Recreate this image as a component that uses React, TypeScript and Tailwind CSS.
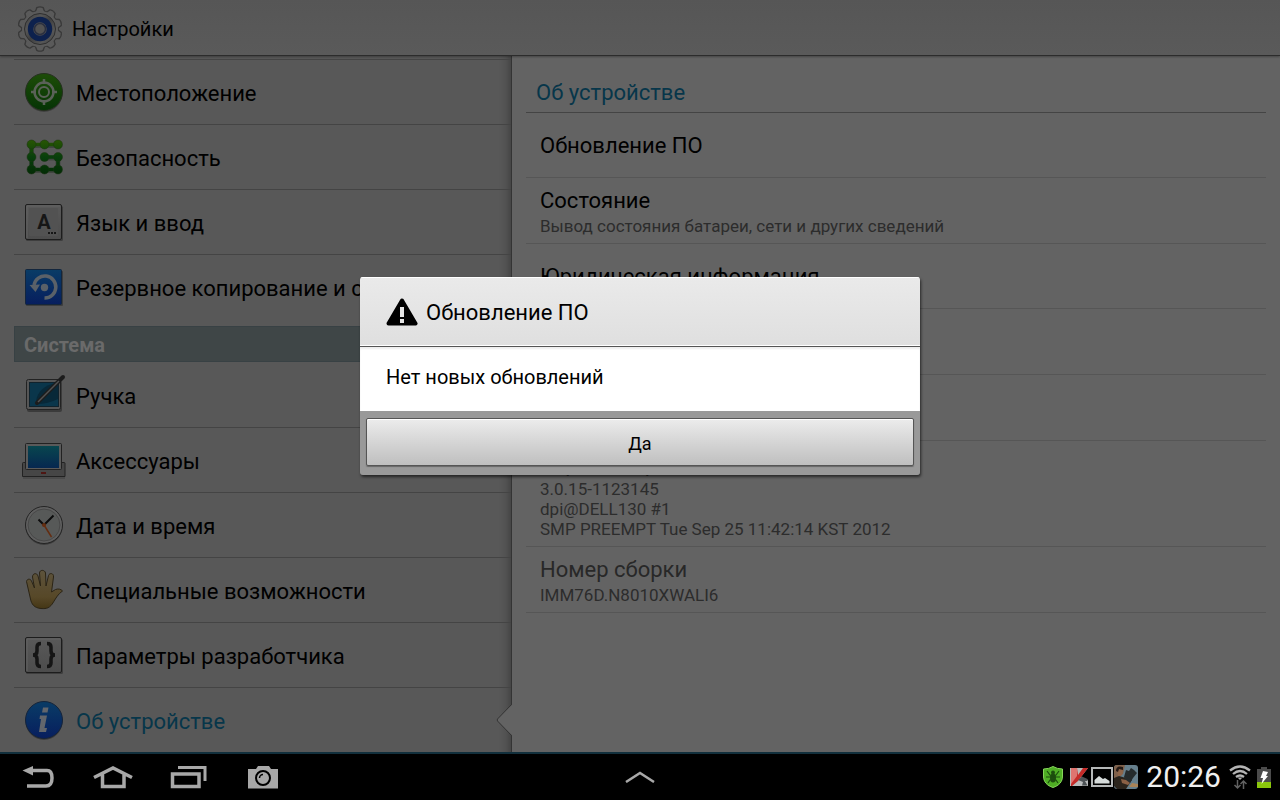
import React from 'react';

type IconProps = { children: React.ReactNode };

const Icon: React.FC<IconProps> = ({ children }) => (
  <svg viewBox="0 0 44 44" className="h-11 w-11 shrink-0" aria-hidden="true">
    {children}
  </svg>
);

const Gradients: React.FC = () => (
  <svg className="absolute h-0 w-0" aria-hidden="true">
    <defs>
      <linearGradient id="green" x1="0" y1="0" x2="0" y2="1">
        <stop offset="0" stopColor="#1d4d08" />
        <stop offset="1" stopColor="#053305" />
      </linearGradient>
      <linearGradient id="nodes" gradientUnits="userSpaceOnUse" x1="0" y1="5" x2="0" y2="39">
        <stop offset="0" stopColor="#285603" />
        <stop offset="0.5" stopColor="#083f0b" />
        <stop offset="1" stopColor="#032c05" />
      </linearGradient>
      <linearGradient id="blue" x1="0" y1="0" x2="0" y2="1">
        <stop offset="0" stopColor="#093c66" />
        <stop offset="1" stopColor="#071e5e" />
      </linearGradient>
      <linearGradient id="grey" x1="0" y1="0" x2="0" y2="1">
        <stop offset="0" stopColor="#595959" />
        <stop offset="1" stopColor="#4c4c4c" />
      </linearGradient>
      <linearGradient id="screen" x1="0" y1="0" x2="0" y2="1">
        <stop offset="0" stopColor="#08464e" />
        <stop offset="1" stopColor="#062750" />
      </linearGradient>
      <linearGradient id="skin" x1="0" y1="0" x2="0" y2="1">
        <stop offset="0" stopColor="#5d533c" />
        <stop offset="0.7" stopColor="#574828" />
        <stop offset="1" stopColor="#443615" />
      </linearGradient>
      <linearGradient id="steel" x1="0" y1="0" x2="1" y2="1">
        <stop offset="0" stopColor="#3c3c3c" />
        <stop offset="0.3" stopColor="#575757" />
        <stop offset="0.5" stopColor="#3f3f3f" />
        <stop offset="0.75" stopColor="#575757" />
        <stop offset="1" stopColor="#3c3c3c" />
      </linearGradient>
    </defs>
  </svg>
);

const teeth = [0, 36, 72, 108, 144, 180, 216, 252, 288, 324];

const GearIcon = () => (
  <svg viewBox="0 0 46 46" className="h-[46px] w-[46px]" aria-hidden="true">
    <g fill="#393939" stroke="#393939" strokeWidth="2">
      {teeth.map((angle) => (
        <path key={angle} d="M18 8L20 2Q23 0.500 26 2L28 8Z" transform={`rotate(${angle} 23 23)`} />
      ))}
    </g>
    <circle cx="23" cy="23" r="19" fill="#393939" />
    <g fill="#5a5a5a">
      {teeth.map((angle) => (
        <path key={angle} d="M18 8L20.500 2Q23 1 25.500 2L28 8Z" transform={`rotate(${angle} 23 23)`} />
      ))}
    </g>
    <circle cx="23" cy="23" r="18" fill="#5a5a5a" />
    <circle cx="23" cy="23" r="15.500" fill="url(#steel)" stroke="#2f2f2f" strokeWidth="1" />
    <circle cx="23" cy="23" r="9.500" fill="#505050" stroke="#0d214d" strokeWidth="5.500" />
    <circle cx="23" cy="23" r="5.500" fill="#525252" stroke="#2b3040" strokeWidth="1.500" />
  </svg>
);

const LocationIcon = () => (
  <Icon>
    <circle cx="22" cy="23.500" r="18.500" fill="#404040" />
    <circle cx="22" cy="22" r="18.500" fill="url(#green)" stroke="#25301f" />
    <circle cx="22" cy="22" r="9.500" fill="none" stroke="#5a6158" strokeWidth="2.500" />
    <circle cx="22" cy="22" r="5" fill="none" stroke="#5a6158" strokeWidth="2" />
    <path d="M22 9V14M22 30V35M9 22H14M30 22H35" stroke="#5a6158" strokeWidth="2.500" />
  </Icon>
);

const SecurityIcon = () => (
  <Icon>
    <path d="M36 10.500H9.500V35.500H36V23H22.500" fill="none" stroke="#404640" strokeWidth="5" />
    <path d="M36 9.500H9.500V34.500H36V22H22.500" fill="none" stroke="url(#nodes)" strokeWidth="3.500" />
    <g fill="url(#nodes)" stroke="#1c3314" strokeWidth="0.500">
      {[9.5, 22, 34.5].map((y) => (
        <React.Fragment key={y}>
          <circle cx="9.500" cy={y} r="4.500" />
          <circle cx="22.500" cy={y} r="4.500" />
          <circle cx="36" cy={y} r="4.500" />
        </React.Fragment>
      ))}
    </g>
  </Icon>
);

const KeyTile: React.FC<IconProps> = ({ children }) => (
  <Icon>
    <rect x="4" y="6" width="37" height="35" rx="1.500" fill="#3e3e3e" />
    <rect x="3.500" y="4.500" width="36" height="35" rx="1.500" fill="url(#grey)" stroke="#1d1d1d" />
    <path d="M5 38V6H38" fill="none" stroke="#626262" />
    {children}
  </Icon>
);

const LanguageIcon = () => (
  <KeyTile>
    <rect x="7" y="8" width="29" height="28" rx="1" fill="#525252" />
    <text x="22" y="29" textAnchor="middle" fontFamily="Roboto, sans-serif" fontWeight="700" fontSize="20" fill="#161616">A</text>
    <path d="M26 33H34" stroke="#161616" strokeWidth="2" strokeDasharray="2 1" />
  </KeyTile>
);

const BackupIcon = () => (
  <Icon>
    <rect x="4" y="6" width="37" height="35" rx="1" fill="#3e3e3e" />
    <rect x="3.500" y="4.500" width="36" height="35" rx="1" fill="url(#blue)" stroke="#13263d" />
    <path d="M12 20A11 11 0 1 1 22.500 33" fill="none" stroke="#5a6168" strokeWidth="3.500" />
    <path d="M7.500 20L18 19.500L13.500 27Z" fill="#5a6168" />
    <circle cx="22.500" cy="22.500" r="3.700" fill="#5a6168" />
  </Icon>
);

const PenIcon = () => (
  <Icon>
    <rect x="5" y="8" width="35" height="31" rx="2" fill="#3b3b3b" />
    <rect x="4.500" y="6.500" width="34" height="30" rx="2" fill="#565656" stroke="#222" />
    <rect x="7.500" y="9.500" width="29" height="24" fill="#0a364b" stroke="#10222c" />
    <path d="M14 29C15 18 23 12 34 10L36 10V26C30 29 22 31 14 31Z" fill="#082838" />
    <path d="M15 30L41 4" stroke="#1c1c1c" strokeWidth="4" strokeLinecap="round" />
    <path d="M16 29L37 8" stroke="#525252" strokeWidth="1.500" />
  </Icon>
);

const AccessoriesIcon = () => (
  <Icon>
    <path d="M0.500 25.500Q0.500 24.500 1.500 24.500H42Q43 24.500 43 25.500V38.500H0.500Z" fill="#464646" stroke="#222" />
    <rect x="3.500" y="5.500" width="36" height="26" rx="1" fill="#5a5a5a" stroke="#222" />
    <rect x="6" y="8" width="31" height="22" fill="url(#screen)" />
    <path d="M19 35H24" stroke="#4e1613" strokeWidth="2" />
    <path d="M1 40H43" stroke="#3f3f3f" strokeWidth="1" />
  </Icon>
);

const ClockIcon = () => (
  <Icon>
    <circle cx="22" cy="23.500" r="18.500" fill="#3d3d3d" />
    <circle cx="22" cy="22" r="18.500" fill="#5f5f5f" stroke="#242424" />
    <circle cx="22" cy="22" r="16" fill="#575958" stroke="#484848" />
    <path d="M16.500 16.500L22 22L31.500 12.500" fill="none" stroke="#0c0c0c" strokeWidth="2" />
    <path d="M22 22L29.500 34" stroke="#652d10" strokeWidth="1.500" />
    <circle cx="22" cy="22" r="2" fill="#652d10" />
  </Icon>
);

const HandIcon = () => (
  <Icon>
    <path
      d="M4.500 13.500C5 10.500 8.500 10.500 9.500 13L12.500 20L10.500 9C10.500 5 15 4.500 16 8L18.500 18L17.500 5C17.500 1.500 23 1.500 23.500 5L24 18L26.500 7.500C27.500 4.500 32 5 31.500 9L29.500 24L33.500 21.500C36 20.500 39 21 40.500 23C36 26 34 30 31.500 34C28 40 25 41 19 40.500C12 40 9.500 36 8.500 31Z"
      fill="url(#skin)" stroke="#2b2415" strokeLinejoin="round"
    />
  </Icon>
);

const DeveloperIcon = () => (
  <KeyTile>
    <path d="M19 10.500Q15 10.500 15 14V18Q15 22 11 22Q15 22 15 26V30Q15 33.500 19 33.500M25 10.500Q29 10.500 29 14V18Q29 22 33 22Q29 22 29 26V30Q29 33.500 25 33.500" fill="none" stroke="#151515" strokeWidth="3.500" />
  </KeyTile>
);

const InfoIcon = () => (
  <Icon>
    <circle cx="22" cy="23.500" r="18.500" fill="#3d3d3d" />
    <circle cx="22" cy="22" r="18.500" fill="url(#blue)" stroke="#15243a" />
    <path d="M21 9.500H26.500L25.500 14.500H20ZM18 17.500H25L22.500 30H25L24 34H17L19 21H17.500Z" fill="#62666c" />
  </Icon>
);

type Item = { title: string; icon: React.FC };

const topItems: Item[] = [
  { title: 'Местоположение', icon: LocationIcon },
  { title: 'Безопасность', icon: SecurityIcon },
  { title: 'Язык и ввод', icon: LanguageIcon },
  { title: 'Резервное копирование и сброс', icon: BackupIcon },
];

const systemItems: Item[] = [
  { title: 'Ручка', icon: PenIcon },
  { title: 'Аксессуары', icon: AccessoriesIcon },
  { title: 'Дата и время', icon: ClockIcon },
  { title: 'Специальные возможности', icon: HandIcon },
  { title: 'Параметры разработчика', icon: DeveloperIcon },
  { title: 'Об устройстве', icon: InfoIcon },
];

const MenuList: React.FC<{ items: Item[]; active?: string }> = ({ items, active }) => (
  <ul className="divide-y divide-[#444]">
    {items.map(({ title, icon: ItemIcon }) => (
      <li key={title} className="relative">
        <a
          href="#"
          className={`flex h-16 items-center gap-[10px] overflow-hidden pl-2 text-[22px] whitespace-nowrap ${
            title === active ? 'text-[#07364a]' : 'text-black'
          }`}
        >
          <ItemIcon />
          <span className="pt-0.5">{title}</span>
        </a>
        {title === active && (
          <svg viewBox="0 0 16 32" className="absolute top-4 -right-px h-8 w-4" aria-hidden="true">
            <path d="M16 0.500L1.500 15Q1 16 1.500 17L16 31.500Z" fill="#636363" />
            <path d="M15.500 0.500L1.500 15Q1 16 1.500 17L15.500 31.500" fill="none" stroke="#343434" />
          </svg>
        )}
      </li>
    ))}
  </ul>
);

type InfoRow = { title: string; lines?: string[]; enabled?: boolean };

const rows: InfoRow[] = [
  { title: 'Обновление ПО', enabled: true },
  { title: 'Состояние', lines: ['Вывод состояния батареи, сети и других сведений'], enabled: true },
  { title: 'Юридическая информация', enabled: true },
  { title: 'Номер модели', lines: ['GT-N8010'] },
  { title: 'Версия Android', lines: ['4.0.4'] },
  {
    title: 'Версия ядра',
    lines: ['3.0.15-1123145', 'dpi@DELL130 #1', 'SMP PREEMPT Tue Sep 25 11:42:14 KST 2012'],
  },
  { title: 'Номер сборки', lines: ['IMM76D.N8010XWALI6'] },
];

const Details: React.FC = () => (
  <section className="flex-1 bg-[#636363] pr-[14px] pl-[14px]">
    <h2 className="flex h-[57px] items-end border-b border-[#444] pb-[3px] pl-[10px] text-[22px] leading-8 text-[#07364a]">
      Об устройстве
    </h2>
    <ul>
      {rows.map((row) => (
        <li
          key={row.title}
          className={`flex flex-col justify-center border-b border-[#565656] pl-[14px] ${
            row.lines ? 'pt-2 pb-[7px]' : 'h-[65px] pt-0.5'
          } ${row.enabled ? 'text-black' : 'text-[#282828]'}`}
        >
          <span className="text-[22px] leading-[30px]">{row.title}</span>
          {row.lines?.map((line) => (
            <span key={line} className="text-[17px] leading-5 text-[#2c2c2c]">{line}</span>
          ))}
        </li>
      ))}
    </ul>
  </section>
);

const Dialog: React.FC = () => (
  <div className="absolute inset-0 flex items-center justify-center">
    <div
      role="alertdialog"
      aria-labelledby="dialog-title"
      className="w-[560px] overflow-hidden rounded-[3px] shadow-[1px_2px_3px_rgba(0,0,0,0.6)]"
    >
      <div className="flex h-[70px] items-center gap-2 border-b border-[#555] bg-linear-to-b from-[#eaeaea] to-[#dfdfdf] pl-[26px] shadow-[inset_0_1px_0_#fff,inset_0_-1px_0_#fff]">
        <svg viewBox="0 0 32 28" className="h-7 w-8" aria-hidden="true">
          <path d="M16 2.500L29.500 25.500H2.500Z" fill="#000" stroke="#000" strokeWidth="4" strokeLinejoin="round" />
          <path d="M14 9H18V19H14ZM14 21H18V25H14Z" fill="#e4e4e4" />
        </svg>
        <h1 id="dialog-title" className="pt-0.5 text-[22px] text-black">Обновление ПО</h1>
      </div>
      <p className="flex h-16 items-center bg-white pb-1 pl-[26px] text-[20px] text-black shadow-[inset_0_2px_2px_#eee]">
        Нет новых обновлений
      </p>
      <div className="bg-[#999] px-[6px] pt-[7px] pb-[9px]">
        <button
          type="button"
          className="h-12 w-full rounded-[2px] border border-[#555] bg-linear-to-b from-[#ececec] to-[#bfbfbf] pt-0.5 text-[18px] text-black shadow-[inset_0_1px_0_#fff,0_1px_1px_#666]"
        >
          Да
        </button>
      </div>
    </div>
  </div>
);

const NavButton: React.FC<{ label: string; children: React.ReactNode }> = ({ label, children }) => (
  <button type="button" aria-label={label} className="flex w-[75px] items-center justify-center">
    <svg viewBox="0 0 40 24" className="h-6 w-10" fill="none" stroke="#a8a8a8" strokeWidth="3.500">
      {children}
    </svg>
  </button>
);

const StatusIcons: React.FC = () => (
  <div className="flex items-center">
    <svg viewBox="0 0 20 22" className="mr-[6px] h-[22px] w-5" aria-hidden="true">
      <path d="M10 0.500Q14 3 19.500 3V10C19.500 16 16 19.500 10 21.500C4 19.500 0.500 16 0.500 10V3Q6 3 10 0.500Z" fill="#4fae25" stroke="#86d65a" />
      <ellipse cx="10" cy="12" rx="3" ry="4.500" fill="#1d4f0e" />
      <circle cx="10" cy="6.500" r="2" fill="#1d4f0e" />
      <path d="M4 5L7 9L10 10L13 9L16 5M3 11L7 11L13 11L17 11M5 17L7 14L13 14L15 17" fill="none" stroke="#1c4d0e" strokeWidth="1.200" />
    </svg>
    <svg viewBox="0 0 20 20" className="mr-[2px] h-5 w-5" aria-hidden="true">
      <path d="M1 1H19L12 10L19 13V19H1Z" fill="#b9bbbb" />
      <path d="M2 1H8L9 8L14 1H19L9 14L3 19H2Z" fill="#c42a28" />
      <path d="M2 1H8V9L2 17Z" fill="#de7470" />
      <path d="M9 13L13 9.500L18.500 12V14L16 14L18.500 18.500H13L14 15Z" fill="#4d5255" />
    </svg>
    <svg viewBox="0 0 22 20" className="mr-px h-5 w-[22px]" aria-hidden="true">
      <rect x="1" y="1" width="20" height="18" fill="#000" stroke="#b5b8b8" strokeWidth="2" />
      <path d="M3.500 16.500V13L8 9L12 12L14 11L18.500 14V16.500Z" fill="#d6dbda" />
    </svg>
    <svg viewBox="0 0 24 24" className="mr-2 h-6 w-6" aria-hidden="true">
      <rect width="24" height="24" rx="3" fill="#667f8c" />
      <path d="M0 3Q0 0 3 0H11L9 9L0 14Z" fill="#7f614b" />
      <path d="M3 5Q4 1 8 2L9 8L7 11H4Z" fill="#8f6549" />
      <path d="M2 6Q2 0 9 2L9 5L5 4L4 7Z" fill="#241914" />
      <path d="M0 13L5 11L12 13L18 15L14 21L12 24H3L0 21Z" fill="#2b241c" />
      <path d="M10 12L12 5L15 6L17 3L20 5L23 8L19 13L16 18L12 17Z" fill="#252b2c" />
      <path d="M7 14L12 15L16 18L14 20L8 18Z" fill="#8a6045" />
      <path d="M15 22L18 18L24 19V22Z" fill="#a98357" />
    </svg>
    <span className="mr-2 text-[30px] leading-8 text-[#efefef]">20:26</span>
    <svg viewBox="0 0 22 25" className="mr-[6px] h-[25px] w-[22px]" fill="none" aria-hidden="true">
      <path d="M1 5.500Q11-2.500 21 5.500M4 9Q11 3 18 9M7 12Q11 9 15 12" stroke="#b4b4b4" strokeWidth="2.300" />
      <path d="M8.500 12.500H13.500L11 15Z" fill="#b4b4b4" />
      <path d="M8.500 15V23M5.500 20L8.500 23L11.500 20M14.500 24V16M11.500 19L14.500 16L17.500 19" stroke="#626262" strokeWidth="1.500" />
    </svg>
    <svg viewBox="0 0 14 21" className="h-[21px] w-[14px]" aria-hidden="true">
      <path d="M4 0H10V2H14V21H0V2H4Z" fill="#4b4b4b" />
      <path d="M0 15H14V21H0Z" fill="#8ac60c" />
      <path d="M6 4L11 5L9 9H11L4.500 17L6 11H3.500Z" fill="#fff" />
    </svg>
  </div>
);

const SystemBar: React.FC = () => (
  <footer className="grid h-12 grid-cols-3 border-t-2 border-[#12303d] bg-black">
    <div className="flex">
      <NavButton label="Назад">
        <path d="M13 5.500H29Q34 5.500 34 13Q34 21 28 21H9" />
        <path d="M15 1V10.500L4.500 5.500Z" fill="#a8a8a8" stroke="none" />
      </NavButton>
      <NavButton label="Домой">
        <path d="M1 12.500L20 3L39 12.500M9.500 9V21.500H31V9" />
      </NavButton>
      <NavButton label="Недавние приложения">
        <path d="M4.500 9H31V21.500H4.500Z" />
        <path d="M10 2.500H37V16" strokeWidth="3" />
      </NavButton>
      <NavButton label="Снимок экрана">
        <path d="M5 4H13L15 1H26L28 4H35V23.500H5Z" fill="#a8a8a8" stroke="none" />
        <circle cx="20" cy="13" r="7" fill="#a8a8a8" stroke="#000" strokeWidth="2" />
        <path d="M16.500 13A3.500 3.500 0 0 1 20 9.500" strokeWidth="1.500" stroke="#000" />
      </NavButton>
    </div>
    <button type="button" aria-label="Мини-приложения" className="flex items-center justify-center">
      <svg viewBox="0 0 30 12" className="h-3 w-[30px]" fill="none" stroke="#a8a8a8" strokeWidth="2.500">
        <path d="M1 11L15 2L29 11" />
      </svg>
    </button>
    <div className="flex items-center justify-end pr-[9px]">
      <StatusIcons />
    </div>
  </footer>
);

const App: React.FC = () => {
  return (
    <div className="flex min-h-screen flex-col bg-[#585858] font-[Roboto,sans-serif]">
      <Gradients />
      <div className="relative flex flex-1 flex-col">
        <header className="z-0 flex h-14 items-center gap-[9px] border-b border-[#2c2c2c] bg-linear-to-b from-[#565656] to-[#5a5a5a] pt-0.5 pl-[17px] shadow-[0_1px_2px_rgba(0,0,0,0.3)]">
          <GearIcon />
          <span className="text-[20px] text-black">Настройки</span>
        </header>
        <main className="flex flex-1">
          <nav className="w-2/5 border-r border-[#343434] bg-[#585858] pt-[3px] pl-[14px] shadow-[inset_-12px_0_10px_-10px_rgba(0,0,0,0.3)]">
            <div className="border-t border-[#444]">
              <MenuList items={topItems} />
            </div>
            <h2 className="mt-[7px] mb-px flex h-9 items-center border border-[#384144] bg-[#3f4647] pt-0.5 pl-[9px] text-[20px] font-bold text-[#6a6a6a]">
              Система
            </h2>
            <MenuList items={systemItems} active="Об устройстве" />
          </nav>
          <Details />
        </main>
        <Dialog />
      </div>
      <SystemBar />
    </div>
  );
};

export default App;
